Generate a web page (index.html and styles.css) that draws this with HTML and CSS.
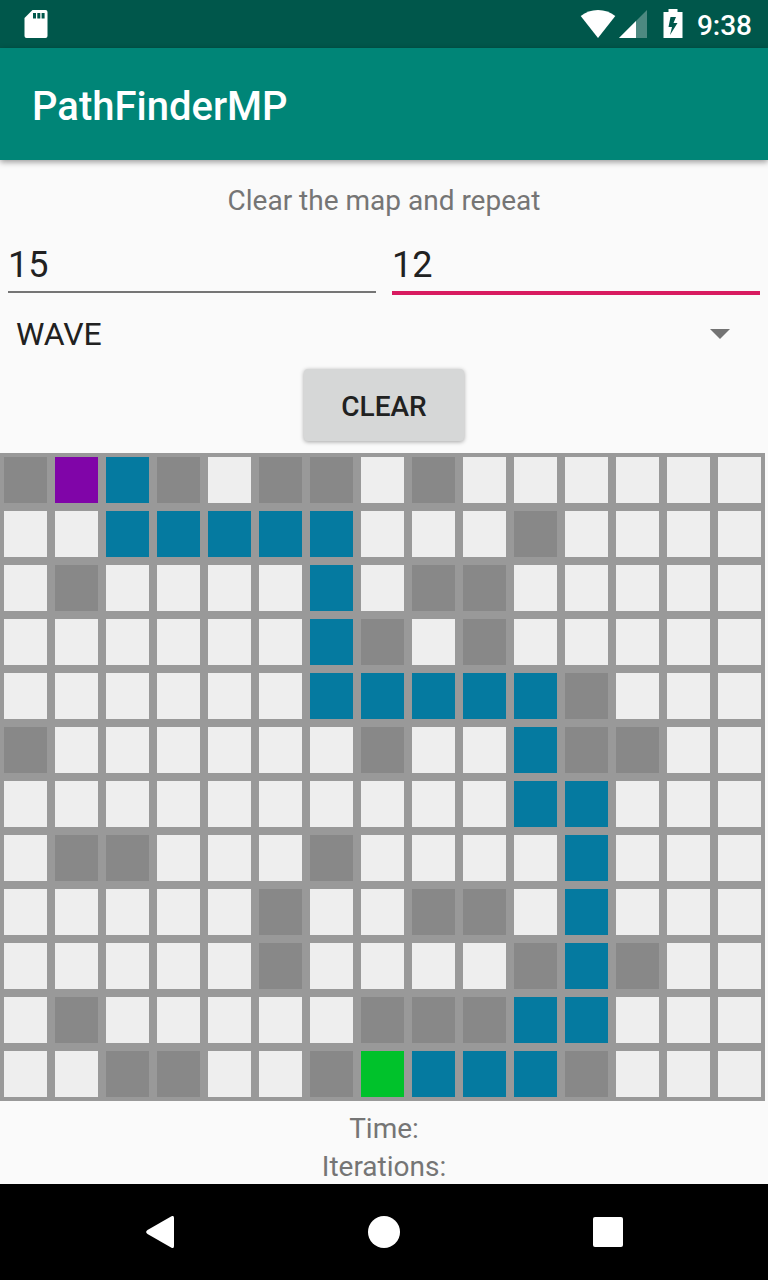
FILE: index.html
```html
<!DOCTYPE html>
<html lang="en">
<head>
<meta charset="utf-8">
<meta name="viewport" content="width=device-width, initial-scale=1">
<title>PathFinderMP</title>
<link rel="stylesheet" href="styles.css">
</head>
<body>
<div class="status-bar">
  <svg class="icon-sd" viewBox="0 0 24 28" aria-hidden="true"><path fill="#fff" fill-rule="evenodd" d="M8.500 0H21.500Q23.500 0 23.500 2V26Q23.500 28 21.500 28H2.500Q.5 28 .5 26V8ZM9 3V8.500H12V3ZM13.300 3V8.500H16.300V3ZM17.600 3V8.500H20.600V3Z"/></svg>
  <div class="status-right">
    <svg class="icon-wifi" viewBox="0 0 36 28" aria-hidden="true"><path fill="#fff" d="M18 28 .7 6Q8 0 18 0T35.300 6Z"/></svg>
    <svg class="icon-signal" viewBox="0 0 28 28" aria-hidden="true"><path fill="#fff" fill-opacity=".3" d="M28 0V28H0Z"/><path fill="#fff" d="M17 11V28H0Z"/></svg>
    <svg class="icon-battery" viewBox="0 0 20 30" aria-hidden="true"><path fill="#fff" fill-rule="evenodd" d="M5.500 0H14.500V3H19.500V29H.5V3H5.500ZM7.500 8 5.500 18H9L7 26 14.500 14H10.500L13 8Z"/></svg>
    <span class="clock">9:38</span>
  </div>
</div>
<header class="app-bar"><h1 class="app-title">PathFinderMP</h1></header>
<main class="content">
  <p class="label">Clear the map and repeat</p>
  <div class="size-row">
    <input class="field" type="text" inputmode="numeric" value="15" aria-label="Columns">
    <input class="field field-active" type="text" inputmode="numeric" value="12" aria-label="Rows">
  </div>
  <div class="spinner">
    <select class="spinner-select" aria-label="Algorithm"><option>WAVE</option></select>
    <svg class="spinner-arrow" viewBox="0 0 20 10" aria-hidden="true"><path fill="#737373" d="M0 0H20L10 10Z"/></svg>
  </div>
  <button class="clear-button" type="button">CLEAR</button>
  <div class="map" id="map"></div>
  <div class="results">
    <p class="label">Time:</p>
    <p class="label">Iterations:</p>
  </div>
</main>
<nav class="nav-bar">
  <button class="nav-button" type="button" aria-label="Back"><svg class="nav-icon" viewBox="0 0 32 32"><path fill="#fff" d="M27.500.3Q30 -.8 30 2V30Q30 32.800 27.500 31.700L3.500 18Q.8 16 3.500 14Z"/></svg></button>
  <button class="nav-button" type="button" aria-label="Home"><svg class="nav-icon" viewBox="0 0 32 32"><circle cx="16" cy="16" r="16" fill="#fff"/></svg></button>
  <button class="nav-button" type="button" aria-label="Recent apps"><svg class="nav-icon" viewBox="0 0 32 32"><rect x="1" y="1" width="30" height="30" rx="2" fill="#fff"/></svg></button>
</nav>
<script src="map.js"></script>
</body>
</html>
```
FILE: styles.css
```css
* { box-sizing: border-box; }
body {
  margin: 0;
  min-height: 100vh;
  display: flex;
  flex-direction: column;
  background: #fafafa;
  color: #212121;
  font-family: Roboto, sans-serif;
}
svg { display: block; }
.status-bar {
  height: 48px;
  padding: 0 16px 0 24px;
  display: flex;
  align-items: center;
  justify-content: space-between;
  background: #00574b;
}
.status-right { display: flex; align-items: center; }
.icon-sd { width: 24px; height: 28px; }
.icon-wifi { width: 36px; height: 28px; margin-right: 3px; }
.icon-signal { width: 28px; height: 28px; margin-right: 16px; }
.icon-battery { width: 20px; height: 30px; margin-right: 14px; }
.clock { padding-top: 4px; color: #fff; font-size: 28px; font-weight: 500; line-height: 44px; }
.app-bar {
  height: 112px;
  padding: 6px 32px 0;
  display: flex;
  align-items: center;
  background: #008577;
  box-shadow: 0 2px 6px rgba(0, 0, 0, .4);
}
.app-title { margin: 0; color: #fff; font-size: 40px; font-weight: 500; line-height: 48px; }
.content { flex: 1; display: flex; flex-direction: column; padding-top: 24px; }
.label { margin: 0; color: #757575; font-size: 28px; line-height: 34px; text-align: center; }
.size-row {
  display: grid;
  grid-template-columns: 1fr 1fr;
  gap: 16px;
  align-items: start;
  padding: 18px 8px 0;
}
.field {
  width: 100%;
  height: 57px;
  padding: 2px 0 0;
  border: 0;
  border-bottom: 2px solid #757575;
  border-radius: 0;
  outline: 0;
  background: transparent;
  color: #212121;
  font: 36px Roboto, sans-serif;
}
.field-active { height: 59px; border-bottom: 4px solid #d81b60; }
.spinner { position: relative; margin-top: 14px; }
.spinner-select {
  display: block;
  width: 100%;
  height: 48px;
  padding: 2px 80px 0 16px;
  border: 0;
  background: transparent;
  color: #212121;
  font: 32px Roboto, sans-serif;
  appearance: none;
}
.spinner-arrow {
  position: absolute;
  right: 38px;
  top: 20px;
  width: 20px;
  height: 10px;
  pointer-events: none;
}
.clear-button {
  align-self: center;
  min-width: 160px;
  height: 72px;
  margin: 12px 0;
  padding: 2px 32px 0;
  border: 0;
  border-radius: 4px;
  background: #d6d7d7;
  box-shadow: 0 1px 4px rgba(0, 0, 0, .35);
  color: #212121;
  font: 500 28px Roboto, sans-serif;
}
.map {
  display: grid;
  grid-template-columns: repeat(15, 1fr);
  gap: 8px;
  margin-right: 3px;
  padding: 4px;
  background: #999;
}
.cell { aspect-ratio: 43 / 46; background: #eee; }
.cell-wall { background: #888; }
.cell-path { background: #057aa0; }
.cell-start { background: #8005a8; }
.cell-finish { background: #00c22b; }
.results { display: grid; gap: 4px; padding-top: 11px; }
.nav-bar {
  height: 96px;
  display: flex;
  align-items: center;
  justify-content: center;
  background: #000;
}
.nav-button {
  flex: 0 1 224px;
  height: 96px;
  display: flex;
  align-items: center;
  justify-content: center;
  padding: 0;
  border: 0;
  background: transparent;
}
.nav-icon { width: 32px; height: 32px; }
```
FILE: map.js
```js
const rows = [
  "#S*#.##.#......",
  "..*****...#....",
  ".#....*.##.....",
  "......*#.#.....",
  "......*****#...",
  "#......#..*##..",
  "..........**...",
  ".##...#....*...",
  ".....#..##.*...",
  ".....#....#*#..",
  ".#.....###**...",
  "..##..#F***#..."
];
const kinds = { "#": "wall", "*": "path", "S": "start", "F": "finish" };
const map = document.getElementById("map");
for (const symbol of rows.join("")) {
  const cell = document.createElement("div");
  cell.className = "cell" + (kinds[symbol] ? " cell-" + kinds[symbol] : "");
  map.append(cell);
}
```
